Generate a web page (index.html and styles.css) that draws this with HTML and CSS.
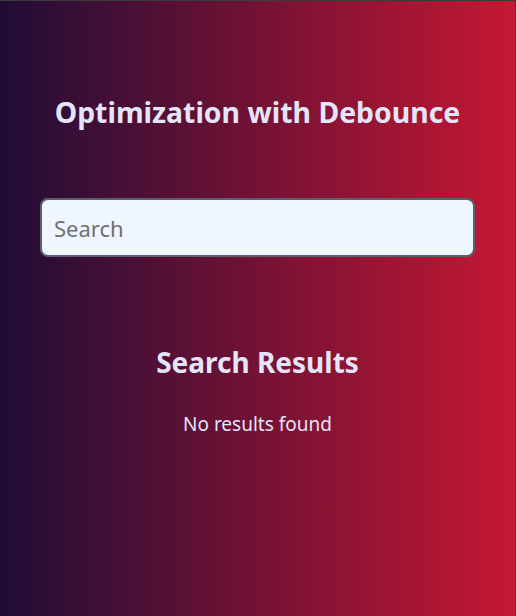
FILE: index.html
```html
<!DOCTYPE html>
<html lang="en">
<head>
  <meta charset="UTF-8">
  <meta name="viewport" content="width=device-width, initial-scale=1.0">
  <title>Debounce Search</title>
  <link rel="stylesheet" href="styles.css">
</head>
<body>
  <div class="app">
    <h1>Optimization with Debounce</h1>

    <input type="text" id="search" class="search-input" placeholder="Search">

    <div class="results">
      <h2>Search Results</h2>
      <p id="results-text">No results found</p>
    </div>
  </div>
</body>
</html>
```

FILE: styles.css
```css
html {
  background: #3b3b3b;
}

body {
  font-family: 'Segoe UI', 'Noto Sans', Tahoma, Geneva, Verdana, sans-serif;
  margin: 0;
  padding: 1px 1px 0 0;
  height: 100vh;
  box-sizing: border-box;
}

.app {
  height: 100%;
  background: linear-gradient(to right, #200c36, #c51833);
  display: flex;
  flex-direction: column;
  align-items: center;
  padding: 0 40px;
  box-sizing: border-box;
}

h1 {
  color: #e4e4fa;
  font-size: 28.4px;
  margin: 92px 0 0;
}

.search-input {
  margin-top: 67px;
  width: 100%;
  height: 59px;
  box-sizing: border-box;
  border: 2px solid #5d5f6d;
  border-radius: 8px;
  background: #eff6ff;
  padding: 0 12px;
  font-family: inherit;
  font-size: 22px;
  color: #333;
}

.search-input::placeholder {
  color: #707070;
}

.results {
  margin-top: 86px;
  text-align: center;
  color: #e4e4fa;
}

.results h2 {
  font-size: 28px;
  margin: 0;
}

.results p {
  font-size: 19px;
  margin: 30px 0 0;
}
```
